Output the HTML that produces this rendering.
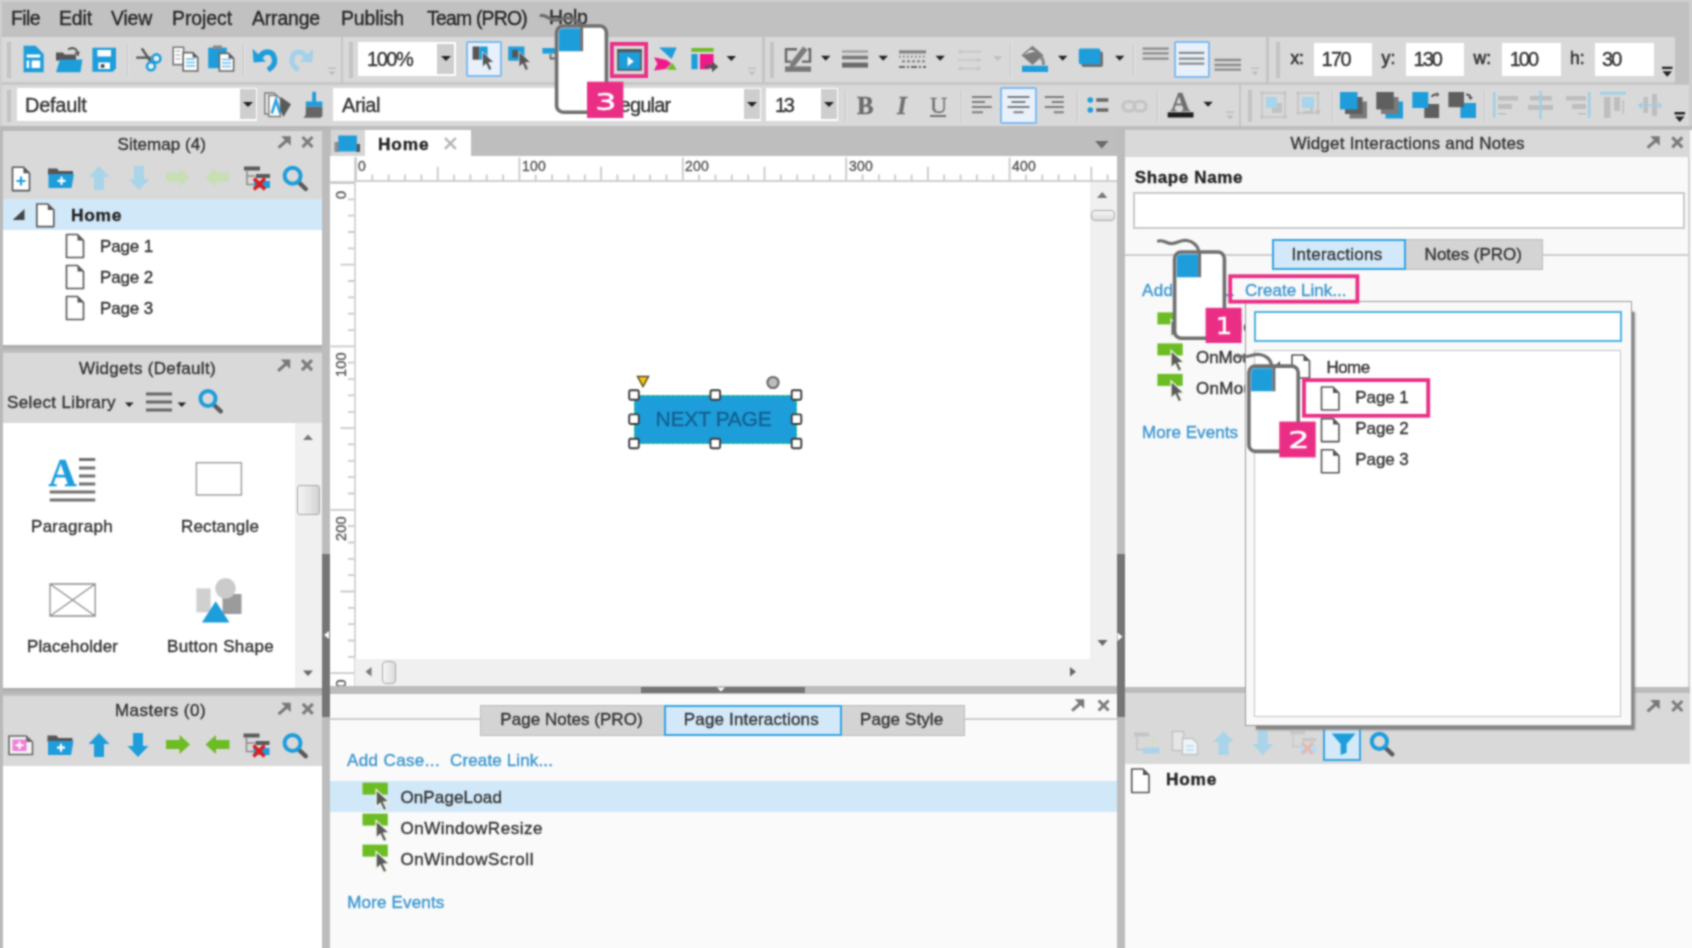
<!DOCTYPE html>
<html><head><meta charset="utf-8"><title>Axure RP - Create Link</title>
<style>
*{box-sizing:border-box;margin:0;padding:0}
html,body{width:1692px;height:948px;overflow:hidden;background:#bdbdbd}
body{font-family:"Liberation Sans",sans-serif;color:#333;position:relative;font-size:16.5px}
.a{position:absolute}
.t{position:absolute;white-space:nowrap;line-height:1;color:#333;-webkit-text-stroke:0.35px currentColor}
.w{background:#fff}
.hd{background:#d9d9d9}
.blue{color:#2b8dc9}
svg{position:absolute;overflow:visible}
.sep{position:absolute;width:2px;background:#c6c6c6;border-right:1px solid #e6e6e6}
.inp{position:absolute;background:#fff}
.dd{position:absolute;background:#cecece}
.arr{position:absolute;width:0;height:0;border-left:5px solid transparent;border-right:5px solid transparent;border-top:5px solid #222}
.grip{position:absolute;width:3.6px;background:#c3c3c3}
#blurwrap{position:absolute;left:0;top:0;width:1692px;height:948px;filter:url(#bl)}
</style></head><body>
<svg width="0" height="0" style="position:absolute"><filter id="bl" x="0" y="0" width="100%" height="100%" color-interpolation-filters="sRGB"><feConvolveMatrix order="5" kernelMatrix="0.0009 0.0069 0.0139 0.0069 0.0009 0.0069 0.0554 0.1107 0.0554 0.0069 0.0139 0.1107 0.2211 0.1107 0.0139 0.0069 0.0554 0.1107 0.0554 0.0069 0.0009 0.0069 0.0139 0.0069 0.0009" divisor="1" edgeMode="duplicate" preserveAlpha="true"/></filter></svg>
<div id="blurwrap">
<div class="a" style="left:-20px;top:-20px;width:1732px;height:988px;background:#bdbdbd"></div>
<!-- ===== MENU BAR ===== -->
<div class="a" id="menubar" style="left:-20px;top:-20px;width:1732px;height:57px;background:#c1c1c1"></div>


<span class="t" style="left:11.0px;top:8.9px;font-size:19.4px;letter-spacing:-0.56px;color:#262626;">File</span>
<span class="t" style="left:59.0px;top:8.9px;font-size:19.4px;letter-spacing:-0.11px;color:#262626;">Edit</span>
<span class="t" style="left:111.0px;top:8.9px;font-size:19.4px;letter-spacing:-0.17px;color:#262626;">View</span>
<span class="t" style="left:172.0px;top:8.9px;font-size:19.4px;letter-spacing:-0.05px;color:#262626;">Project</span>
<span class="t" style="left:252.0px;top:8.9px;font-size:19.4px;letter-spacing:-0.14px;color:#262626;">Arrange</span>
<span class="t" style="left:341.0px;top:8.9px;font-size:19.4px;letter-spacing:-0.09px;color:#262626;">Publish</span>
<span class="t" style="left:427.0px;top:8.9px;font-size:19.4px;letter-spacing:-0.78px;color:#262626;">Team (PRO)</span>
<span class="t" style="left:549.0px;top:8.4px;font-size:19.4px;letter-spacing:-0.35px;color:#262626;">Help</span>
<!-- ===== TOOLBARS ===== -->
<div class="a" id="tb1" style="left:-20px;top:37px;width:1732px;height:45.5px;background:#d9d9d9"></div>
<div class="a" id="tb2" style="left:-20px;top:82px;width:1732px;height:44px;background:#d9d9d9;border-top:3.5px solid #c7c7c7"></div>
<div class="a" id="tb1end" style="left:1675px;top:37px;width:40px;height:47px;background:#c1c1c1"></div>
<div class="a" style="left:1689px;top:-20px;width:30px;height:150px;background:#cecece"></div>
<!-- toolbar section dividers & grips -->
<div class="a" style="left:340.5px;top:37px;width:2.6px;height:46px;background:#c5c5c5"></div>
<div class="a" style="left:762px;top:37px;width:2.6px;height:46px;background:#c5c5c5"></div>
<div class="a" style="left:1266.3px;top:37px;width:2.6px;height:46px;background:#c5c5c5"></div>
<div class="a" style="left:1238.8px;top:85px;width:2.6px;height:41px;background:#c5c5c5"></div>
<div class="grip" style="left:7px;top:42px;height:36px"></div>
<div class="grip" style="left:349px;top:42px;height:36px"></div>
<div class="grip" style="left:770px;top:42px;height:36px"></div>
<div class="grip" style="left:1276px;top:42px;height:36px"></div>
<div class="grip" style="left:7px;top:90px;height:32px"></div>
<div class="grip" style="left:1248px;top:90px;height:32px"></div>
<!-- inputs -->
<div class="inp" style="left:17px;top:87.5px;width:240px;height:33px"></div><div class="dd" style="left:239.5px;top:89px;width:16px;height:30px"></div><div class="arr" style="left:243px;top:102px"></div>
<div class="inp" style="left:358px;top:42px;width:98px;height:33.5px"></div><div class="dd" style="left:437px;top:44px;width:17px;height:29.500px"></div><div class="arr" style="left:441px;top:56px"></div>
<div class="inp" style="left:333px;top:87.5px;width:428px;height:33px"></div><div class="dd" style="left:743.5px;top:89px;width:16px;height:30px"></div><div class="arr" style="left:746.5px;top:102px"></div>
<div class="inp" style="left:766px;top:87.5px;width:72px;height:33px"></div><div class="dd" style="left:820.5px;top:89px;width:16px;height:30px"></div><div class="arr" style="left:823.5px;top:102px"></div>
<div class="inp" style="left:1313.5px;top:43px;width:58.5px;height:32.5px"></div>
<div class="inp" style="left:1406px;top:43px;width:58px;height:32.5px"></div>
<div class="inp" style="left:1502px;top:43px;width:58.5px;height:32.5px"></div>
<div class="inp" style="left:1595px;top:43px;width:58.5px;height:32.5px"></div>
<!-- selected buttons -->
<div class="a" style="left:466px;top:40.5px;width:36px;height:36.5px;background:#e8f1fb;border:2px solid #7fbaf0;border-radius:2px"></div>
<div class="a" style="left:1173.5px;top:41px;width:36.5px;height:37px;background:#e8f1fb;border:2px solid #7fbaf0;border-radius:2px"></div>
<div class="a" style="left:1000px;top:87px;width:37px;height:36.5px;background:#e8f1fb;border:2px solid #7fbaf0;border-radius:2px"></div>
<!-- separators -->
<div class="sep" style="left:126.5px;top:44px;height:32px"></div>
<div class="sep" style="left:242.5px;top:44px;height:32px"></div>
<div class="sep" style="left:1009.5px;top:44px;height:32px"></div>
<div class="sep" style="left:1132.5px;top:44px;height:32px"></div>
<div class="sep" style="left:844.5px;top:90px;height:32px"></div>
<div class="sep" style="left:960.5px;top:90px;height:32px"></div>
<div class="sep" style="left:1076.5px;top:90px;height:32px"></div>
<div class="sep" style="left:1156.5px;top:90px;height:32px"></div>
<div class="sep" style="left:1331.5px;top:90px;height:32px"></div>
<div class="sep" style="left:1483.5px;top:90px;height:32px"></div>
<svg width="1692" height="130" viewBox="0 0 1692 130" style="left:0;top:0">
<!-- new -->
<path d="M23.6 45.8H35.6L43.7 54V72.2H23.6Z" fill="#1e9ddb"/>
<path d="M26.6 54.5h13.6v3H26.6zM26.6 60.5h2.6V68h-2.6zM31.6 60.5h8.6V68h-8.6z" fill="#fff"/>
<!-- open -->
<path d="M56 52.5h7l1.5 2H76v6H56z" fill="#555"/>
<path d="M60 59.6H82.4L80.4 72.2H56Z" fill="#1e9ddb"/>
<path d="M68 49.5c4-2.5 8-1.5 9.5 2.5" fill="none" stroke="#555" stroke-width="2"/><path d="M74.3 52.8l5.6-1.4-1.6 5z" fill="#555"/>
<!-- save -->
<path d="M92.4 47.8H116V68.5L112.8 71.8H92.4Z" fill="#1e9ddb"/>
<path d="M97.4 50h13.6v6.6H97.4zM98.4 62.6H110V69H98.4z" fill="#fff"/><circle cx="102.6" cy="66" r="2.1" fill="#444"/>
<!-- cut -->
<path d="M136.2 57.6h14.8M141.8 48.4l10.4 15.6" stroke="#555" stroke-width="2.4" fill="none"/>
<circle cx="156.4" cy="58.4" r="4" fill="#eaf4fb" stroke="#1e9ddb" stroke-width="2.6"/><circle cx="151" cy="66.2" r="4" fill="#eaf4fb" stroke="#1e9ddb" stroke-width="2.6"/>
<!-- copy -->
<path d="M173.2 47.2h10.4V64.6h-10.4z" fill="#fff" stroke="#777" stroke-width="1.6"/>
<path d="M175.5 51h5M175.5 55h5M175.5 59h5" stroke="#bbb" stroke-width="1.4"/>
<path d="M183.2 52.6h9.5l5 5V71h-14.5z" fill="#fff" stroke="#666" stroke-width="1.6"/>
<path d="M186 59h9M186 62.5h9M186 66h9" stroke="#8fcbee" stroke-width="2"/><path d="M192.7 52.6v5h5z" fill="#555"/>
<!-- paste -->
<path d="M208.2 47.6h18.6V68.2H208.2z" fill="#1e9ddb"/><path d="M213 45.5h9v3.5h-9z" fill="#888"/>
<path d="M219.4 53.4h9.2l5 5V71h-14.2z" fill="#fff" stroke="#666" stroke-width="1.6"/>
<path d="M222 59.5h9M222 63h9M222 66.5h9" stroke="#8fcbee" stroke-width="2"/><path d="M228.6 53.4v5h5z" fill="#555"/>
<!-- undo / redo -->
<g fill="none" stroke="#1e9ddb" stroke-width="5.4"><path d="M260 57.5c3-7 13-8 14.5 1.5 0.800 5.500-3 9-6.500 11"/></g><path d="M252.600 48.800l1 13.600 12.400-1z" fill="#1e9ddb"/>
<g fill="none" stroke="#a3d1e9" stroke-width="5"><path d="M306 57.500c-3-7-12.500-8-14 1.500-0.800 5.500 3 9 6.500 11"/></g><path d="M313.200 48.800l-1 13.600-12.400-1z" fill="#a3d1e9"/>
<!-- overflow chevrons (light) -->
<g fill="#bdbdbd"><path d="M328 67.500h8v1.600h-8zM328.500 71.500h7l-3.500 4z"/><path d="M748 67.500h8v1.600h-8zM748.500 71.500h7l-3.500 4z"/><path d="M1251 67.500h8v1.600h-8zM1251.500 71.500h7l-3.500 4z"/><path d="M1226 111.500h8v1.600h-8zM1226.500 115.500h7l-3.500 4z"/></g>
<g fill="#222"><path d="M1662 66.700h10.500v2.400h-10.500zM1662.500 71.200h9.500l-4.750 5.500z"/><path d="M1674.500 112h10.500v2.400h-10.500zM1675 116.500h9.500l-4.750 5.500z"/></g>
<!-- select tool 1 -->
<path d="M472.600 46.500h6.800v13.200h-6.800z" fill="#555"/><path d="M479.400 46.500h8.200v13.200h-8.200z" fill="#1e9ddb"/>
<path d="M482.400 51.600v15.600l3.600-3.400 3 6.600 2.800-1.300-3-6.500 5-0.400z" fill="#555" stroke="#e8f1fb" stroke-width="0.800"/>
<!-- select tool 2 -->
<path d="M508.200 46.500h16.200v14.200h-16.200z" fill="#1e9ddb"/><path d="M512.300 50h5.600v7.600h-5.600z" fill="#555"/>
<path d="M519 51.600v15.600l3.600-3.400 3 6.600 2.800-1.300-3-6.500 5-0.400z" fill="#555" stroke="#d9d9d9" stroke-width="0.800"/>
<!-- connector tool -->
<path d="M542.400 48h22v5.600h-22z" fill="#1e9ddb"/><path d="M550.500 54v4.500h5" fill="none" stroke="#666" stroke-width="1.800"/>
<!-- preview -->
<path d="M618 50h23v20h-23z" fill="#1e9ddb" stroke="#555" stroke-width="1.600"/><path d="M617.200 49.200h24.600v3h-24.600z" fill="#555"/>
<path d="M627.600 56.600v9.600l6.200-4.800z" fill="#fff"/>
<!-- publish -->
<path d="M659 47.400h17.700l-5.100 11.600z" fill="#1e9ddb"/><path d="M654 57.300l12.500 2.700 4.800 3.500-5.600 5.600-11.700 1.300 3.400-6.600z" fill="#f0198a"/><path d="M666.600 69.700h10.200l-4.500-6.700z" fill="#6cbc23"/>
<!-- share -->
<path d="M691.400 48h22.200v3.800h-22.200z" fill="#6cbc23"/><path d="M691.400 54h6.200v15.200h-6.200z" fill="#1e9ddb"/><path d="M700 54h13.600v12h-5v3.200h-8.600z" fill="#f0198a"/>
<path d="M705 65h7v-3.600l6.400 5.400-6.400 5.400v-3.600h-7z" fill="#555"/>
<path d="M726.600 56h9.400l-4.700 5z" fill="#222"/>
</svg>
<svg width="1692" height="130" viewBox="0 0 1692 130" style="left:0;top:0">
<!-- pen / line colour -->
<path d="M797 49.200h-11v12.400h5M802 61.600h8v-12.400h-2" fill="none" stroke="#666" stroke-width="2.400"/>
<path d="M803 46.500l4.600 3.300-12.600 16.200-5.600 2 1.400-5.800z" fill="#7b7b7b"/>
<path d="M785 66.400h26v5.400h-26z" fill="#777"/>
<g fill="#222"><path d="M821 55.800h9.400l-4.700 5z"/><path d="M878.500 55.800h9.400l-4.700 5z"/><path d="M935.500 55.800h9.400l-4.700 5z"/><path d="M1058 55.800h9.400l-4.700 5z"/><path d="M1115 55.800h9.400l-4.700 5z"/><path d="M1203.400 101.700h9.400l-4.700 5z"/></g>
<path d="M993 56h9.400l-4.700 5z" fill="#c0c0c0"/>
<!-- line width -->
<path d="M842 50.400h26v2.200h-26z" fill="#999"/><path d="M842 55.700h26v3.600h-26z" fill="#7a7a7a"/><path d="M842 62.600h26v5h-26z" fill="#6a6a6a"/>
<!-- line pattern -->
<path d="M899 50.400h27v3h-27z" fill="#808080"/>
<path d="M899 56.600h27" stroke="#777" stroke-width="1.600" stroke-dasharray="1.500 2.500"/>
<path d="M902 61.400h24" stroke="#777" stroke-width="1.800" stroke-dasharray="3 2"/>
<path d="M899 67h27" stroke="#666" stroke-width="2" stroke-dasharray="6 2 2 2"/>
<!-- arrows disabled -->
<g stroke="#c6c6c6" stroke-width="1.600" fill="#c6c6c6"><path d="M958 51.600h23M958 60h23M958 68.600h23"/><path d="M958 51.600l4-2.500v5zM981 60l-4-2.500v5zM958 68.600l4-2.500v5zM981 68.600l-4-2.500v5z" stroke="none"/></g>
<!-- bucket -->
<path d="M1032.500 45.800l11 9.400-11 9.800-11-9.800z" fill="#7b7b7b"/><path d="M1024 55.200l6-5.200 6 1.200-7 1.500z" fill="#f2f2f2"/>
<path d="M1041.500 55.500c3 2 3.500 6 3.500 9.500h-3c0-3-0.500-5-2.500-7z" fill="#8a8a8a"/>
<path d="M1022 65.700h26v6.300h-26z" fill="#1e9ddb"/>
<!-- shadow -->
<rect x="1081.500" y="51.400" width="21.500" height="15.600" rx="2" fill="#707070"/><rect x="1078.800" y="48.600" width="21.500" height="15.600" rx="2" fill="#1e9ddb"/>
<!-- valign -->
<g fill="#8b8b8b"><path d="M1142.600 47.400h26v2.400h-26zM1142.600 52.200h26v2.400h-26zM1142.600 57.400h26v2.400h-26z"/>
<path d="M1178.800 51.700h25.500v2.400h-25.500zM1178.800 57.400h25.500v2.400h-25.500zM1178.800 62.400h25.500v2.400h-25.500z"/>
<path d="M1214.500 58.800h26.500v2.400h-26.500zM1214.500 63.800h26.500v2.400h-26.500zM1214.500 68.400h26.500v2.400h-26.500z"/></g>
<!-- style icons row2 -->
<path d="M264.800 93h9l4 3.500V114h-13z" fill="#e8e8e8" stroke="#7a7a7a" stroke-width="1.400"/>
<path d="M268.800 95.500h7.500l4 3.500v17.500h-11.500z" fill="#fff" stroke="#7a7a7a" stroke-width="1.400"/>
<path d="M271.800 113.500l4.200-13.500 4.200 13.500" fill="none" stroke="#2aa3e0" stroke-width="2.600"/>
<path d="M280.500 96.800l10.500 7.500-7.600 12.700-2.900-6.500z" fill="#5a5a5a"/>
<path d="M312.200 92.500q1.900-2 3.800 0v9.500h-3.800z" fill="#1e9ddb"/><path d="M305.800 101.500h16.600v5.200h-16.600z" fill="#1e9ddb"/>
<path d="M305.800 106.700h16.600v8c0 2-1 3-3 3h-16c2-1.500 2.400-3 2.400-5z" fill="#666"/>
<!-- halign -->
<g fill="#7d7d7d"><path d="M972 96h19.700v2h-19.700zM972 101h13v2h-13zM972 106h19.700v2h-19.700zM972 111.300h11v2h-11z"/>
<path d="M1007.500 96h22v2h-22zM1011.500 101h14v2h-14zM1007.500 106h22v2h-22zM1013.500 111.300h10v2h-10z"/>
<path d="M1044.800 96h19v2h-19zM1051.800 101h12v2h-12zM1044.800 106h19v2h-19zM1053.800 111.300h10v2h-10z"/></g>
<!-- bullets -->
<circle cx="1090.300" cy="100" r="2.800" fill="#1e9ddb"/><circle cx="1090.300" cy="110" r="2.800" fill="#1e9ddb"/><path d="M1096.300 98.300h12v3.500h-12zM1096.300 108.300h12v3.500h-12z" fill="#666"/>
<!-- link disabled -->
<g fill="none" stroke="#c4c4c4" stroke-width="3.200"><rect x="1123" y="101.500" width="12" height="9.500" rx="4.700"/><rect x="1134" y="101.500" width="12" height="9.500" rx="4.700"/></g>
<!-- text colour bar -->
<path d="M1167.700 112.300h25.800v5.200h-25.800z" fill="#1c1c1c"/>
<!-- group / ungroup (disabled) -->
<g fill="none" stroke="#c2c2c2" stroke-width="1.500"><rect x="1262" y="93" width="23" height="24"/><rect x="1298" y="93" width="20" height="20"/></g>
<g fill="#c2c2c2"><path d="M1260.500 91.500h3v3h-3zM1283.500 91.500h3v3h-3zM1260.500 115.500h3v3h-3zM1283.500 115.500h3v3h-3zM1296.500 91.500h3v3h-3zM1316.500 91.500h3v3h-3zM1296.500 111.500h3v3h-3zM1316.500 111.500h3v3h-3z"/><path d="M1272 103h10v10h-10zM1310 104h3v10h-10v-3h7zM1318 108l3 4h-6z"/></g>
<path d="M1266 97h11v11h-11zM1302 97h12v11h-12z" fill="#a6d5ec"/>
<!-- order icons -->
<path d="M1349.500 101.500h17.500v17h-17.500z" fill="#7a7a7a"/><path d="M1345 97h17.500v17h-17.500z" fill="#5f5f5f"/><path d="M1340 92h17.500v17.400h-17.500z" fill="#1e9ddb"/>
<path d="M1385.500 101.500h17.500v17h-17.500z" fill="#1e9ddb"/><path d="M1381 97h17.500v17h-17.500z" fill="#7a7a7a"/><path d="M1376.300 92h17.500v17.400h-17.500z" fill="#5f5f5f"/>
<path d="M1424.300 104h14.800v14h-14.800z" fill="#5f5f5f"/><path d="M1412.300 92h16v16h-16z" fill="#1e9ddb"/><path d="M1431 97c0.500-3 3-3.500 5.500-3.500v-1.500l3 2.500-3 2.500v-1.500c-2 0-3 0.500-3.500 1.500z" fill="#555"/>
<path d="M1460.400 103h15.600v15h-15.600z" fill="#1e9ddb"/><path d="M1448.400 92h15.600v15.200h-15.600z" fill="#5f5f5f"/><path d="M1466 93.500c3 0 5 1 5.500 3.500h1.500l-2.500 3-2.500-3h1.500c-0.500-1-1.500-1.500-3.500-1.500z" fill="#555"/>
<!-- align icons (disabled) -->
<g fill="#bebebe"><path d="M1498 96h20v4.500h-20zM1498 104h14v5h-14zM1498 113h8v1.500h-8z"/>
<path d="M1530 96h22v4.500h-22zM1528 105h25v5h-25z"/>
<path d="M1566 96h20v4.500h-20zM1572 104h14v5h-14zM1578 113h8v1.500h-8z"/>
<path d="M1604 97h6.500v21h-6.500zM1614 97h6v14h-6zM1622.500 100h1.500v14h-1.500z"/>
<path d="M1643.500 97h4.500v16h-4.500zM1652 94h5v22h-5z"/></g>
<g fill="#9ccfe9"><path d="M1493 92h2.400v26h-2.400zM1539.300 91h2.400v28h-2.400zM1588 92h2.400v26h-2.400zM1600 92h26v2.400h-26z"/><path d="M1637.500 105.500l4.500-3.500v7zM1662.500 105.500l-4.500-3.500v7zM1641 104.700h18v1.600h-18z"/></g>
</svg>
<span class="t" style="left:1170.500px;top:88.500px;font-size:27px;font-family:'Liberation Serif',serif;font-weight:bold;color:#6e6e6e">A</span>

<div class="a" id="topline" style="left:-20px;top:-20px;width:1740px;height:22px;background:#cecece"></div>
<div class="a" id="leftline" style="left:-20px;top:-20px;width:22px;height:146px;background:#cfcfcf"></div>


<span class="t" style="left:367.0px;top:48.8px;font-size:20.0px;letter-spacing:-1.44px;">100%</span>
<span class="t" style="left:25.0px;top:95.0px;font-size:20.0px;letter-spacing:-0.27px;">Default</span>
<span class="t" style="left:342.0px;top:94.8px;font-size:20.0px;letter-spacing:-0.40px;">Arial</span>
<span class="t" style="left:606.0px;top:94.8px;font-size:20.0px;letter-spacing:-0.82px;">Regular</span>
<span class="t" style="left:775.0px;top:94.8px;font-size:20.0px;letter-spacing:-2.40px;">13</span>
<span class="t" style="left:1290.5px;top:50.1px;font-size:17.5px;letter-spacing:-0.31px;-webkit-text-stroke:0.6px currentColor;">x:</span>
<span class="t" style="left:1381.5px;top:50.1px;font-size:17.5px;letter-spacing:0.19px;-webkit-text-stroke:0.6px currentColor;">y:</span>
<span class="t" style="left:1473.5px;top:50.1px;font-size:17.5px;letter-spacing:0.00px;-webkit-text-stroke:0.6px currentColor;">w:</span>
<span class="t" style="left:1570.0px;top:50.1px;font-size:17.5px;letter-spacing:-0.05px;-webkit-text-stroke:0.6px currentColor;">h:</span>
<span class="t" style="left:1321.5px;top:49.0px;font-size:20.0px;letter-spacing:-1.62px;">170</span>
<span class="t" style="left:1413.6px;top:49.0px;font-size:20.0px;letter-spacing:-1.99px;">130</span>
<span class="t" style="left:1509.8px;top:49.0px;font-size:20.0px;letter-spacing:-2.06px;">100</span>
<span class="t" style="left:1602.0px;top:49.0px;font-size:20.0px;letter-spacing:-1.77px;">30</span>
<span class="t" style="left:857.0px;top:92.8px;font-size:25.0px;letter-spacing:1.50px;font-family:'Liberation Serif',serif;font-weight:bold;color:#6b6b6b;">B</span>
<span class="t" style="left:897.0px;top:92.8px;font-size:25.0px;letter-spacing:1.50px;font-family:'Liberation Serif',serif;font-style:italic;font-weight:bold;color:#727272;">I</span>
<span class="t" style="left:930.0px;top:92.7px;font-size:24.0px;letter-spacing:-1.34px;font-family:'Liberation Serif',serif;color:#727272;text-decoration:underline;text-underline-offset:2px;">U</span>
<!-- ===== LEFT PANELS ===== -->
<!-- left dock edge -->
<div class="a" style="left:-20px;top:126px;width:350px;height:842px;background:#b9b9b9"></div>
<!-- Sitemap -->
<div class="a hd" style="left:3px;top:131px;width:319px;height:69px"></div>
<div class="a w" style="left:3px;top:199px;width:319px;height:146px"></div>
<div class="a" style="left:3px;top:199px;width:319px;height:31px;background:#d1e8f9"></div>
<div class="a" style="left:3px;top:345px;width:319px;height:8px;background:linear-gradient(#a9a9a9,#c4c4c4)"></div>
<!-- Widgets -->
<div class="a hd" style="left:3px;top:353px;width:319px;height:71px"></div>
<div class="a w" style="left:3px;top:423px;width:292px;height:265px"></div>
<div class="a" style="left:295px;top:423px;width:27px;height:265px;background:#f0f0f0"></div>
<div class="a" style="left:297px;top:485px;width:23px;height:30px;border:1.5px solid #a9a9a9;border-radius:3px;background:linear-gradient(90deg,#f4f4f4,#e2e2e2 60%,#d2d2d2)"></div>
<div class="a" style="left:3px;top:688px;width:319px;height:8px;background:linear-gradient(#a9a9a9,#c4c4c4)"></div>
<!-- Masters -->
<div class="a hd" style="left:3px;top:696px;width:319px;height:70px"></div>
<div class="a w" style="left:3px;top:766px;width:319px;height:202px"></div>
<!-- left splitter -->
<div class="a" style="left:322px;top:131px;width:8px;height:837px;background:#bcbcbc"></div>
<div class="a" style="left:322px;top:554px;width:8px;height:163px;background:#757575"></div>
<div class="a" style="left:324px;top:631px;width:0;height:0;border-top:4px solid transparent;border-bottom:4px solid transparent;border-right:5px solid #fff"></div>

<svg width="1692" height="948" viewBox="0 0 1692 948" style="left:0;top:0"><path d="M278.6 147.6l8.300 -7.300" stroke="#787878" stroke-width="3" fill="none"/><path d="M281.1 136.2h9.600v9.600z" fill="#787878"/><path d="M302.5 137.0l10.0 10.0M312.5 137.0l-10.0 10.0" stroke="#7c7c7c" stroke-width="3.1" fill="none"/><path d="M278.1 370.8l8.300 -7.300" stroke="#787878" stroke-width="3" fill="none"/><path d="M280.6 359.4h9.600v9.600z" fill="#787878"/><path d="M302.0 360.2l10.0 10.0M312.0 360.2l-10.0 10.0" stroke="#7c7c7c" stroke-width="3.1" fill="none"/><path d="M278.6 714.1l8.300 -7.300" stroke="#787878" stroke-width="3" fill="none"/><path d="M281.1 702.7h9.600v9.600z" fill="#787878"/><path d="M302.8 703.8l10.0 10.0M312.8 703.8l-10.0 10.0" stroke="#7c7c7c" stroke-width="3.1" fill="none"/><path d="M12.5 167.2h11.0l6.0 6.0v17.4h-17.0z" fill="#fff" stroke="#555" stroke-width="1.6" stroke-linejoin="round"/><path d="M23.5 167.2v6.0h6.0z" fill="#555"/><path d="M16.500 181h9M21 176.500v9" stroke="#1e9ddb" stroke-width="2.200"/><path d="M48.0 168.6h9l2 2.500h14v4h-25z" fill="#555"/><path d="M48.5 174.1h25.500l-2.500 14h-23z" fill="#1e9ddb"/><path d="M57.5 180.8h8M61.5 176.8v8" stroke="#fff" stroke-width="2.200"/><path d="M99.0 166.0l10.500 11h-5.500v13h-10v-13h-5.500z" fill="#a9d4ea"/><path d="M139.0 190.0l10.500 -11h-5.500v-13h-10v13h-5.500z" fill="#a9d4ea"/><path d="M190.0 177.3l-10.500 -9.500v5h-13.500v9h13.500v5z" fill="#c8dfb4"/><path d="M205.0 177.3l10.500 -9.500v5h13.500v9h-13.500v5z" fill="#c8dfb4"/><path d="M244.0 166.5h16v4h-16z" fill="#5a5a5a"/><path d="M247.0 170.5v14h10M247.0 176.0h8" stroke="#8a8a8a" stroke-width="1.500" fill="none"/><path d="M256.0 174.0h14v4h-14z" fill="#5a5a5a"/><path d="M254.0 181.0h16v7h-16z" fill="#1e9ddb"/><path d="M254.0 178.5l11 11M265.0 178.5l-11 11" stroke="#e01b1b" stroke-width="3.400"/><path d="M298.6 182.2l7.200 6.800" stroke="#5a5a5a" stroke-width="4.400" stroke-linecap="round"/><circle cx="292.6" cy="175.8" r="8.0" fill="none" stroke="#1e9ddb" stroke-width="4.0"/><path d="M12.700 220h11.800v-11z" fill="#444"/><path d="M36.8 204.0h11.0l6.0 6.0v16.6h-17.0z" fill="#fff" stroke="#555" stroke-width="1.6" stroke-linejoin="round"/><path d="M47.8 204.0v6.0h6.0z" fill="#555"/><path d="M66.5 234.5h11.0l6.0 6.0v17.0h-17.0z" fill="#fff" stroke="#555" stroke-width="1.6" stroke-linejoin="round"/><path d="M77.5 234.5v6.0h6.0z" fill="#555"/><path d="M66.5 265.5h11.0l6.0 6.0v17.0h-17.0z" fill="#fff" stroke="#555" stroke-width="1.6" stroke-linejoin="round"/><path d="M77.5 265.5v6.0h6.0z" fill="#555"/><path d="M66.5 296.5h11.0l6.0 6.0v17.0h-17.0z" fill="#fff" stroke="#555" stroke-width="1.6" stroke-linejoin="round"/><path d="M77.5 296.5v6.0h6.0z" fill="#555"/><path d="M125 402.500h8.600l-4.300 4.600z" fill="#222"/><path d="M177.500 402.500h8.600l-4.300 4.600z" fill="#222"/><path d="M146 392.500h26v3h-26zM146 400.500h26v3h-26zM146 408.500h26v3h-26z" fill="#666"/><path d="M213.6 404.5l7.200 6.800" stroke="#5a5a5a" stroke-width="4.400" stroke-linecap="round"/><circle cx="208.0" cy="398.5" r="7.5" fill="none" stroke="#1e9ddb" stroke-width="4.0"/><path d="M303 440l5-5.500 5 5.500z" fill="#777"/><path d="M303 670.500h10l-5 5.500z" fill="#666"/><path d="M79 458h16.200v3h-16.200zM79 466.400h16.200v3h-16.200zM79 474.600h16.200v3h-16.200zM79 482.600h16.200v3h-16.200zM49.700 490.600h45.500v3h-45.500zM49.700 498.400h45.500v3h-45.500z" fill="#707070"/><rect x="196.400" y="462.700" width="45" height="32.300" fill="#fff" stroke="#a2a2a2" stroke-width="1.500"/><path d="M50 584h45.200v32h-45.200zM50 584l45.200 32M95.200 584l-45.200 32" fill="#fff" stroke="#8e8e8e" stroke-width="1.300"/><rect x="196.400" y="588.400" width="14.200" height="24" fill="#d0d0d0"/><rect x="222.500" y="594" width="19" height="20" fill="#9b9b9b"/><circle cx="225.500" cy="588.400" r="10.300" fill="#cbcbcb"/><path d="M215.700 601.200l13.800 21.200h-27.600z" fill="#1e9ddb"/><g transform="translate(0,-1.500)"><path d="M9 737.500h17l6.500 6v12.500h-23.500z" fill="#f4f4f4" stroke="#666" stroke-width="1.600"/><path d="M26 737.500v6h6.500z" fill="#666"/><path d="M12.500 741h14v11.500h-14z" fill="#ee7fd6"/><path d="M15.500 746.700h8M19.500 743v7.500" stroke="#fff" stroke-width="2"/><path d="M47.5 737.0h9l2 2.500h14v4h-25z" fill="#555"/><path d="M48.0 742.5h25.500l-2.500 14h-23z" fill="#1e9ddb"/><path d="M57.0 749.2h8M61.0 745.2v8" stroke="#fff" stroke-width="2.200"/><path d="M99.0 734.5l10.500 11h-5.500v13h-10v-13h-5.500z" fill="#1e9ddb"/><path d="M138.0 758.5l10.500 -11h-5.500v-13h-10v13h-5.500z" fill="#1e9ddb"/><path d="M190.0 746.0l-10.500 -9.500v5h-13.500v9h13.500v5z" fill="#6cbc23"/><path d="M205.5 746.0l10.500 -9.500v5h13.500v9h-13.500v5z" fill="#6cbc23"/><path d="M243.5 735.0h16v4h-16z" fill="#5a5a5a"/><path d="M246.5 739.0v14h10M246.5 744.5h8" stroke="#8a8a8a" stroke-width="1.500" fill="none"/><path d="M255.5 742.5h14v4h-14z" fill="#5a5a5a"/><path d="M253.5 749.5h16v7h-16z" fill="#1e9ddb"/><path d="M253.5 747.0l11 11M264.5 747.0l-11 11" stroke="#e01b1b" stroke-width="3.400"/><path d="M298.5 750.9l7.200 6.800" stroke="#5a5a5a" stroke-width="4.400" stroke-linecap="round"/><circle cx="292.5" cy="744.5" r="8.0" fill="none" stroke="#1e9ddb" stroke-width="4.0"/></g></svg><span class="t" style="left:48.500px;top:452.500px;font-size:39px;font-family:'Liberation Serif',serif;font-weight:bold;color:#1e9ddb">A</span>
<span class="t" style="left:117.5px;top:136.3px;font-size:17.0px;letter-spacing:0.06px;">Sitemap (4)</span>
<span class="t" style="left:71.0px;top:206.6px;font-size:17.4px;letter-spacing:0.67px;font-weight:bold;color:#242424;">Home</span>
<span class="t" style="left:100.0px;top:237.9px;font-size:17.0px;letter-spacing:-0.15px;">Page 1</span>
<span class="t" style="left:100.0px;top:268.9px;font-size:17.0px;letter-spacing:-0.15px;">Page 2</span>
<span class="t" style="left:100.0px;top:299.9px;font-size:17.0px;letter-spacing:-0.15px;">Page 3</span>
<span class="t" style="left:79.0px;top:359.5px;font-size:17.0px;letter-spacing:0.33px;">Widgets (Default)</span>
<span class="t" style="left:7.0px;top:394.2px;font-size:17.0px;letter-spacing:0.36px;">Select Library</span>
<span class="t" style="left:31.0px;top:517.8px;font-size:17.0px;letter-spacing:0.29px;">Paragraph</span>
<span class="t" style="left:181.0px;top:517.8px;font-size:17.0px;letter-spacing:0.16px;">Rectangle</span>
<span class="t" style="left:27.0px;top:638.2px;font-size:17.0px;letter-spacing:0.11px;">Placeholder</span>
<span class="t" style="left:167.0px;top:638.2px;font-size:17.0px;letter-spacing:0.33px;">Button Shape</span>
<span class="t" style="left:115.0px;top:701.5px;font-size:17.0px;letter-spacing:0.46px;">Masters (0)</span>
<!-- ===== CENTRE ===== -->
<!-- tab bar -->
<div class="a" style="left:330px;top:126px;width:787px;height:30px;background:#bebebe"></div>
<div class="a" style="left:331px;top:130px;width:34px;height:27px;background:#d6d6d6"></div>
<div class="a w" style="left:364.5px;top:130px;width:106px;height:28px"></div>
<!-- rulers -->
<div class="a w" style="left:330px;top:156px;width:787px;height:26px"></div>
<div class="a w" style="left:330px;top:182px;width:25px;height:504px"></div>
<div class="a w" style="left:355px;top:182px;width:735px;height:478px"></div>
<div class="a" style="left:355px;top:180px;width:762px;height:2px;background:#cfcfcf"></div>
<div class="a" style="left:353.5px;top:157px;width:2px;height:529px;background:#d6d6d6"></div>
<div class="a" style="left:330px;top:181px;width:25px;height:2px;background:#d6d6d6"></div>
<!-- scrollbars -->
<div class="a" style="left:1090px;top:182px;width:27px;height:478px;background:#f0f0f0"></div>
<div class="a" style="left:355px;top:659px;width:762px;height:27px;background:#f0f0f0"></div>
<div class="a" style="left:1091px;top:210px;width:24px;height:11px;border:1.5px solid #a9a9a9;border-radius:4px;background:linear-gradient(#f6f6f6,#dcdcdc)"></div>
<div class="a" style="left:382px;top:661px;width:14px;height:23px;border:1.5px solid #a9a9a9;border-radius:4px;background:linear-gradient(90deg,#f6f6f6,#dcdcdc)"></div>
<!-- canvas widget -->
<div class="a" style="left:634px;top:395px;width:162.5px;height:48.5px;background:#1e9ddb;border:1.8px dashed #30e34a"></div>

<svg width="1692" height="948" viewBox="0 0 1692 948" style="left:0;top:0"><path d="M334.500 142h4.500v10h-4.500z" fill="#8c8c8c"/><path d="M356 144h4v8h-4z" fill="#555"/><path d="M338.300 135.500h18.600v16h-18.600z" fill="#1e9ddb"/><path d="M445.0 138.0l10.8 10.8M455.8 138.0l-10.8 10.8" stroke="#b4b4b4" stroke-width="2.4" fill="none"/><path d="M1095 141h13.500l-6.750 7.500z" fill="#6a6a6a"/><path d="M356.0 157.5V181M372.3 174.5V181M388.7 174.5V181M405.0 174.5V181M421.4 174.5V181M437.7 166.8V181M454.0 174.5V181M470.4 174.5V181M486.7 174.5V181M503.1 174.5V181M519.4 157.5V181M535.7 174.5V181M552.1 174.5V181M568.4 174.5V181M584.8 174.5V181M601.1 166.8V181M617.4 174.5V181M633.8 174.5V181M650.1 174.5V181M666.5 174.5V181M682.8 157.5V181M699.1 174.5V181M715.5 174.5V181M731.8 174.5V181M748.2 174.5V181M764.5 166.8V181M780.8 174.5V181M797.2 174.5V181M813.5 174.5V181M829.9 174.5V181M846.2 157.5V181M862.5 174.5V181M878.9 174.5V181M895.2 174.5V181M911.6 174.5V181M927.9 166.8V181M944.2 174.5V181M960.6 174.5V181M976.9 174.5V181M993.3 174.5V181M1009.6 157.5V181M1025.9 174.5V181M1042.3 174.5V181M1058.6 174.5V181M1075.0 174.5V181M1091.3 166.8V181M1107.6 174.5V181M330.5 183.0H354.500M348.0 199.3H354.500M348.0 215.7H354.500M348.0 232.0H354.500M348.0 248.4H354.500M340.5 264.7H354.500M348.0 281.0H354.500M348.0 297.4H354.500M348.0 313.7H354.500M348.0 330.1H354.500M330.5 346.4H354.500M348.0 362.7H354.500M348.0 379.1H354.500M348.0 395.4H354.500M348.0 411.8H354.500M340.5 428.1H354.500M348.0 444.4H354.500M348.0 460.8H354.500M348.0 477.1H354.500M348.0 493.5H354.500M330.5 509.8H354.500M348.0 526.1H354.500M348.0 542.5H354.500M348.0 558.8H354.500M348.0 575.2H354.500M340.5 591.5H354.500M348.0 607.8H354.500M348.0 624.2H354.500M348.0 640.5H354.500M348.0 656.9H354.500M330.5 673.2H354.500" stroke="#c9c9c9" stroke-width="1.800" fill="none"/><path d="M1097 198l5.200-6 5.200 6z" fill="#777"/><path d="M1097.500 640h10l-5 6z" fill="#666"/><path d="M371.500 667v9.500l-6-4.750z" fill="#777"/><path d="M1070 667v9.500l6-4.750z" fill="#666"/><rect x="629.2" y="390.2" width="9.600" height="9.600" rx="1.500" fill="#fff" stroke="#3a3a3a" stroke-width="1.900"/><rect x="710.5" y="390.2" width="9.600" height="9.600" rx="1.500" fill="#fff" stroke="#3a3a3a" stroke-width="1.900"/><rect x="791.7" y="390.2" width="9.600" height="9.600" rx="1.500" fill="#fff" stroke="#3a3a3a" stroke-width="1.900"/><rect x="629.2" y="414.4" width="9.600" height="9.600" rx="1.500" fill="#fff" stroke="#3a3a3a" stroke-width="1.900"/><rect x="791.7" y="414.4" width="9.600" height="9.600" rx="1.500" fill="#fff" stroke="#3a3a3a" stroke-width="1.900"/><rect x="629.2" y="438.7" width="9.600" height="9.600" rx="1.500" fill="#fff" stroke="#3a3a3a" stroke-width="1.900"/><rect x="710.5" y="438.7" width="9.600" height="9.600" rx="1.500" fill="#fff" stroke="#3a3a3a" stroke-width="1.900"/><rect x="791.7" y="438.7" width="9.600" height="9.600" rx="1.500" fill="#fff" stroke="#3a3a3a" stroke-width="1.900"/><path d="M637.500 376.500h11l-5.500 10z" fill="#f6c619" stroke="#5a4a10" stroke-width="1.500"/><circle cx="773" cy="382.500" r="5.600" fill="#bdbdbd" stroke="#666" stroke-width="2"/></svg><div class="a" style="left:330px;top:183px;width:24px;height:503px;overflow:hidden"><span class="t" style="left:3.500px;top:15.5px;font-size:14.500px;color:#555;transform-origin:0 0;transform:rotate(-90deg);letter-spacing:0.200px">0</span><span class="t" style="left:3.500px;top:193.5px;font-size:14.500px;color:#555;transform-origin:0 0;transform:rotate(-90deg);letter-spacing:0.200px">100</span><span class="t" style="left:3.500px;top:357.5px;font-size:14.500px;color:#555;transform-origin:0 0;transform:rotate(-90deg);letter-spacing:0.200px">200</span><span class="t" style="left:3.500px;top:521.0px;font-size:14.500px;color:#555;transform-origin:0 0;transform:rotate(-90deg);letter-spacing:0.200px">300</span></div>
<span class="t" style="left:378.0px;top:136.2px;font-size:17.3px;letter-spacing:0.87px;font-weight:bold;color:#242424;">Home</span>
<span class="t" style="left:358.0px;top:158.5px;font-size:14.0px;letter-spacing:0.20px;color:#555;">0</span>
<span class="t" style="left:522.0px;top:158.5px;font-size:14.0px;letter-spacing:0.21px;color:#555;">100</span>
<span class="t" style="left:685.0px;top:158.5px;font-size:14.0px;letter-spacing:0.21px;color:#555;">200</span>
<span class="t" style="left:849.0px;top:158.5px;font-size:14.0px;letter-spacing:0.21px;color:#555;">300</span>
<span class="t" style="left:1012.0px;top:158.5px;font-size:14.0px;letter-spacing:0.21px;color:#555;">400</span>
<span class="t" style="left:655.5px;top:407.6px;font-size:21.0px;letter-spacing:-0.26px;color:#14618f;">NEXT PAGE</span>
<!-- ===== BOTTOM ===== -->
<div class="a" style="left:330px;top:686px;width:787px;height:8px;background:#bcbcbc"></div>
<div class="a" style="left:641px;top:687px;width:164px;height:6px;background:#757575"></div>
<div class="a" style="left:330px;top:694px;width:787px;height:274px;background:#fafafa"></div>
<div class="a" style="left:330px;top:718px;width:787px;height:2px;background:#cdcdcd"></div>
<div class="a" style="left:480px;top:704.5px;width:485px;height:31.5px;background:#d4d4d4;border:1.5px solid #bcbcbc"></div>
<div class="a" style="left:664px;top:704.5px;width:178px;height:31.5px;background:#d3e9f9;border:2px solid #35a5e3"></div>
<div class="a" style="left:330px;top:781px;width:787px;height:31px;background:#d1e8f9"></div>

<svg width="1692" height="948" viewBox="0 0 1692 948" style="left:0;top:0"><path d="M1072.1 710.6l8.300 -7.300" stroke="#787878" stroke-width="3" fill="none"/><path d="M1074.6 699.2h9.600v9.600z" fill="#787878"/><path d="M1098.6 700.5l10.0 10.0M1108.6 700.5l-10.0 10.0" stroke="#7c7c7c" stroke-width="3.1" fill="none"/><path d="M362.5 782.6h25.300v12h-25.300z" fill="#6cbc23"/><path d="M376.1 789.6v17.500l4.200-3.800 3.300 7.200 3.200-1.500-3.300-7 5.600-0.400z" fill="#595959" stroke="#eef6e6" stroke-width="1.300"/><path d="M362.5 813.6h25.300v12h-25.300z" fill="#6cbc23"/><path d="M376.1 820.6v17.500l4.200-3.800 3.300 7.200 3.200-1.500-3.300-7 5.600-0.400z" fill="#595959" stroke="#eef6e6" stroke-width="1.300"/><path d="M362.5 844.6h25.300v12h-25.300z" fill="#6cbc23"/><path d="M376.1 851.6v17.500l4.200-3.800 3.300 7.200 3.200-1.500-3.300-7 5.600-0.400z" fill="#595959" stroke="#eef6e6" stroke-width="1.300"/><path d="M717 687.500h8l-4 4z" fill="#fff"/></svg>
<span class="t" style="left:500.3px;top:711.1px;font-size:17.0px;letter-spacing:0.04px;">Page Notes (PRO)</span>
<span class="t" style="left:683.8px;top:711.1px;font-size:17.0px;letter-spacing:0.16px;">Page Interactions</span>
<span class="t" style="left:860.0px;top:711.1px;font-size:17.0px;letter-spacing:0.11px;">Page Style</span>
<span class="t" style="left:347.0px;top:752.3px;font-size:17.0px;letter-spacing:0.38px;color:#3b96cf;">Add Case...</span>
<span class="t" style="left:450.0px;top:752.3px;font-size:17.0px;letter-spacing:0.14px;color:#3b96cf;">Create Link...</span>
<span class="t" style="left:400.4px;top:789.0px;font-size:17.0px;letter-spacing:0.14px;">OnPageLoad</span>
<span class="t" style="left:400.4px;top:820.2px;font-size:17.0px;letter-spacing:0.54px;">OnWindowResize</span>
<span class="t" style="left:400.4px;top:851.3px;font-size:17.0px;letter-spacing:0.57px;">OnWindowScroll</span>
<span class="t" style="left:347.3px;top:894.4px;font-size:17.0px;letter-spacing:0.16px;color:#3b96cf;">More Events</span>
<!-- ===== RIGHT ===== -->
<div class="a" style="left:1117px;top:126px;width:8px;height:842px;background:#bcbcbc"></div>
<div class="a" style="left:1116.8px;top:554px;width:8.4px;height:163px;background:#757575"></div>
<div class="a" style="left:1125px;top:126px;width:587px;height:4px;background:#bebebe"></div>
<div class="a hd" style="left:1125px;top:130px;width:587px;height:27px"></div>
<div class="a" style="left:1125px;top:157px;width:587px;height:530px;background:#f9f9f9"></div>
<div class="a w" style="left:1132.5px;top:192px;width:552px;height:37px;border:2px solid #cacaca"></div>
<div class="a" style="left:1125px;top:253.5px;width:564px;height:2px;background:#cdcdcd"></div>
<div class="a" style="left:1272px;top:239px;width:271px;height:30.5px;background:#d4d4d4;border:1.5px solid #bcbcbc"></div>
<div class="a" style="left:1272px;top:239px;width:134px;height:30.5px;background:#d3e9f9;border:2px solid #35a5e3"></div>
<div class="a" style="left:1688px;top:157px;width:2px;height:530px;background:#d2d2d2"></div><div class="a" style="left:1690px;top:157px;width:22px;height:530px;background:#f0f0f0"></div>
<!-- outline panel -->
<div class="a" style="left:1125px;top:687px;width:587px;height:6px;background:#bcbcbc"></div>
<div class="a hd" style="left:1125px;top:693px;width:587px;height:71px"></div>
<div class="a" style="left:1125px;top:764px;width:587px;height:204px;background:#fafafa"></div>
<div class="a" style="left:1323px;top:727px;width:38px;height:34px;background:#d3e9f9;border:2px solid #35a5e3"></div>

<div class="a" id="redge" style="left:1689.5px;top:130px;width:25px;height:840px;background:#fafafa"></div>

<svg width="1692" height="948" viewBox="0 0 1692 948" style="left:0;top:0"><path d="M1647.6 147.6l8.300 -7.300" stroke="#787878" stroke-width="3" fill="none"/><path d="M1650.1 136.2h9.600v9.600z" fill="#787878"/><path d="M1672.3 137.3l10.0 10.0M1682.3 137.3l-10.0 10.0" stroke="#7c7c7c" stroke-width="3.1" fill="none"/><path d="M1647.6 711.3l8.300 -7.300" stroke="#787878" stroke-width="3" fill="none"/><path d="M1650.1 699.9h9.600v9.600z" fill="#787878"/><path d="M1672.3 701.0l10.0 10.0M1682.3 701.0l-10.0 10.0" stroke="#7c7c7c" stroke-width="3.1" fill="none"/><path d="M1117.500 632.500l5 4.200-5 4.200z" fill="#fff"/><path d="M1157.4 312.4h25.300v12h-25.300z" fill="#6cbc23"/><path d="M1171.0 319.4v17.500l4.200-3.800 3.300 7.200 3.200-1.500-3.300-7 5.600-0.400z" fill="#595959" stroke="#eef6e6" stroke-width="1.300"/><path d="M1157.4 343.4h25.300v12h-25.300z" fill="#6cbc23"/><path d="M1171.0 350.4v17.500l4.200-3.800 3.300 7.200 3.200-1.500-3.300-7 5.600-0.400z" fill="#595959" stroke="#eef6e6" stroke-width="1.300"/><path d="M1157.4 373.9h25.300v12h-25.300z" fill="#6cbc23"/><path d="M1171.0 380.9v17.500l4.200-3.800 3.300 7.200 3.200-1.500-3.300-7 5.600-0.400z" fill="#595959" stroke="#eef6e6" stroke-width="1.300"/><path d="M1134 732.500h15v4h-15z" fill="#c4c4c4"/><path d="M1137 736.500v13h8" stroke="#c4c4c4" stroke-width="1.500" fill="none"/><path d="M1143 747.500h16.500v6h-16.500z" fill="#a9d4ea"/><path d="M1147 741h8m-3-3l3 3-3 3" stroke="#cfe0b8" stroke-width="1.600" fill="none"/><path d="M1172.500 731.500h11v19h-11z" fill="#e6e6e6" stroke="#c2c2c2" stroke-width="1.400"/><path d="M1182.500 738.500h10l5 5v11h-15z" fill="#eef5fa" stroke="#c2c2c2" stroke-width="1.400"/><path d="M1186 746h8M1186 750h8" stroke="#b8daec" stroke-width="1.600"/><path d="M1223.5 731.0l10.500 11h-5.500v13h-10v-13h-5.500z" fill="#a9d4ea"/><path d="M1262.8 755.0l10.500 -11h-5.500v-13h-10v13h-5.500z" fill="#a9d4ea"/><path d="M1290 731h15v3.500h-15z" fill="#c8c8c8"/><path d="M1293 734.500v12h8" stroke="#c8c8c8" stroke-width="1.400" fill="none"/><path d="M1302 738h14v3.500h-14z" fill="#c8c8c8"/><path d="M1300 745h17v8h-17z" fill="#b9dcee"/><path d="M1302 743l11 11M1313 743l-11 11" stroke="#e9b5ad" stroke-width="3"/><path d="M1331.600 733.400h24l-9 10.500v8.800l-6 2.300v-11.100z" fill="#1e9ddb"/><path d="M1385.1 747.5l7.200 6.800" stroke="#5a5a5a" stroke-width="4.400" stroke-linecap="round"/><circle cx="1379.4" cy="741.4" r="7.6" fill="none" stroke="#1e9ddb" stroke-width="4.0"/><path d="M1131.7 769.0h11.3l6.0 6.0v17.5h-17.3z" fill="#fff" stroke="#555" stroke-width="1.6" stroke-linejoin="round"/><path d="M1143.0 769.0v6.0h6.0z" fill="#555"/></svg>
<span class="t" style="left:1290.4px;top:134.5px;font-size:17.0px;letter-spacing:0.23px;">Widget Interactions and Notes</span>
<span class="t" style="left:1134.8px;top:168.9px;font-size:17.0px;letter-spacing:0.62px;font-weight:bold;color:#242424;">Shape Name</span>
<span class="t" style="left:1291.6px;top:245.9px;font-size:17.0px;letter-spacing:0.25px;">Interactions</span>
<span class="t" style="left:1424.6px;top:245.9px;font-size:17.0px;letter-spacing:0.01px;">Notes (PRO)</span>
<span class="t" style="left:1142.0px;top:281.7px;font-size:17.0px;letter-spacing:0.38px;color:#3b96cf;">Add Case...</span>
<span class="t" style="left:1245.0px;top:281.7px;font-size:17.0px;letter-spacing:0.03px;color:#3b96cf;">Create Link...</span>
<span class="t" style="left:1196.0px;top:318.3px;font-size:17.0px;letter-spacing:0.93px;">OnClick</span>
<span class="t" style="left:1196.0px;top:349.3px;font-size:17.0px;letter-spacing:-0.03px;">OnMouseEnter</span>
<span class="t" style="left:1196.0px;top:380.0px;font-size:17.0px;letter-spacing:0.29px;">OnMouseOut</span>
<span class="t" style="left:1142.0px;top:423.9px;font-size:17.0px;letter-spacing:0.05px;color:#3b96cf;">More Events</span>
<span class="t" style="left:1166.0px;top:771.1px;font-size:17.3px;letter-spacing:0.75px;font-weight:bold;color:#242424;">Home</span>
<!-- ===== OVERLAYS ===== -->
<div class="a" style="left:1256px;top:312px;width:378px;height:416.5px;background:#868686;box-shadow:0 0 2px 0.5px #8d8d8d"></div>
<div class="a" style="left:1244.5px;top:300.5px;width:387px;height:425px;background:#f9f9f9;border:1.8px solid #9c9c9c"></div>
<div class="a w" style="left:1253.6px;top:310.6px;width:368px;height:31px;border:2px solid #4fb3e4"></div>
<div class="a w" style="left:1254.4px;top:350.4px;width:367px;height:367px;border:1.6px solid #c4c4c4"></div>

<svg width="1692" height="948" viewBox="0 0 1692 948" style="left:0;top:0"><path d="M1274.500 366.500h5.500v-5.500z" fill="#444"/><path d="M1292.0 355.0h11.5l6.0 6.0v17.0h-17.5z" fill="#fff" stroke="#555" stroke-width="1.6" stroke-linejoin="round"/><path d="M1303.5 355.0v6.0h6.0z" fill="#555"/><path d="M1321.5 387.0h11.5l6.0 6.0v17.0h-17.5z" fill="#fff" stroke="#555" stroke-width="1.6" stroke-linejoin="round"/><path d="M1333.0 387.0v6.0h6.0z" fill="#555"/><path d="M1321.5 418.6h11.5l6.0 6.0v17.0h-17.5z" fill="#fff" stroke="#555" stroke-width="1.6" stroke-linejoin="round"/><path d="M1333.0 418.6v6.0h6.0z" fill="#555"/><path d="M1321.5 449.7h11.5l6.0 6.0v17.0h-17.5z" fill="#fff" stroke="#555" stroke-width="1.6" stroke-linejoin="round"/><path d="M1333.0 449.7v6.0h6.0z" fill="#555"/></svg>
<span class="t" style="left:1326.4px;top:358.8px;font-size:17.0px;letter-spacing:-0.51px;">Home</span>
<span class="t" style="left:1355.3px;top:389.4px;font-size:17.0px;letter-spacing:-0.10px;">Page 1</span>
<span class="t" style="left:1355.3px;top:420.2px;font-size:17.0px;letter-spacing:-0.10px;">Page 2</span>
<span class="t" style="left:1355.3px;top:451.1px;font-size:17.0px;letter-spacing:-0.10px;">Page 3</span>

<svg width="1692" height="948" viewBox="0 0 1692 948" style="left:0;top:0"><rect x="611.9" y="43.9" width="34.2" height="32.2" fill="none" stroke="#ea2e86" stroke-width="3.8"/><rect x="1230.2" y="276.2" width="127.2" height="25.5" fill="none" stroke="#ea2e86" stroke-width="3.8"/><rect x="1304.0" y="380.1" width="124.2" height="35.7" fill="none" stroke="#ea2e86" stroke-width="3.8"/><path d="M541 15.500c4-1 8 3.500 13 4.500s12-4 18.500-1 8.500 4.500 9.500 7.500" fill="none" stroke="#6f6f6f" stroke-width="3.200" stroke-linecap="round"/><rect x="556.6" y="26.0" width="49.8" height="86.2" rx="6.500" fill="#fff" stroke="#6f6f6f" stroke-width="3.600"/><path d="M558.8 32.7q0 -4.500 4.500 -4.500h17.0v23h-21.5z" fill="#1e9ddb"/><path d="M581.6 26.0v25.200" stroke="#6f6f6f" stroke-width="3"/><path d="M1158.500 241c5-1.500 8 3 13.500 2.500s9-4 15-3 10.500 5 11.500 9.500" fill="none" stroke="#6f6f6f" stroke-width="3.200" stroke-linecap="round"/><rect x="1174.6" y="252.0" width="49.8" height="86.2" rx="6.500" fill="#fff" stroke="#6f6f6f" stroke-width="3.600"/><path d="M1176.8 258.7q0 -4.500 4.500 -4.500h17.0v23h-21.5z" fill="#1e9ddb"/><path d="M1199.6 252.0v25.200" stroke="#6f6f6f" stroke-width="3"/><path d="M1236 355.500c4 1.500 6 1 10 1s8-2.500 13.300-2 11 4 12 9.500" fill="none" stroke="#6f6f6f" stroke-width="3.200" stroke-linecap="round"/><rect x="1248.9" y="366.1" width="49.3" height="85.3" rx="6.500" fill="#fff" stroke="#6f6f6f" stroke-width="3.600"/><path d="M1251.1 372.8q0 -4.500 4.500 -4.500h17.0v23h-21.5z" fill="#1e9ddb"/><path d="M1273.9 366.1v25.200" stroke="#6f6f6f" stroke-width="3"/><rect x="587.0" y="81.7" width="36.4" height="36.3" fill="#ea2e86"/><rect x="1205.6" y="307.8" width="36.0" height="35.2" fill="#ea2e86"/><rect x="1279.3" y="421.6" width="36.4" height="35.8" fill="#ea2e86"/></svg><span class="t" style="left:590.8px;top:90.9px;width:30px;text-align:center;font-family:'DejaVu Sans',sans-serif;font-size:23.5px;color:#fff;-webkit-text-stroke:0.45px #fff;transform:scaleX(1.42)">3</span><span class="t" style="left:1209.2px;top:314.7px;width:30px;text-align:center;font-family:'DejaVu Sans',sans-serif;font-size:23.5px;color:#fff;-webkit-text-stroke:0.45px #fff;transform:scaleX(1.10)">1</span><span class="t" style="left:1284.0px;top:429.0px;width:30px;text-align:center;font-family:'DejaVu Sans',sans-serif;font-size:23.5px;color:#fff;-webkit-text-stroke:0.45px #fff;transform:scaleX(1.42)">2</span>

</div>
</body></html>
